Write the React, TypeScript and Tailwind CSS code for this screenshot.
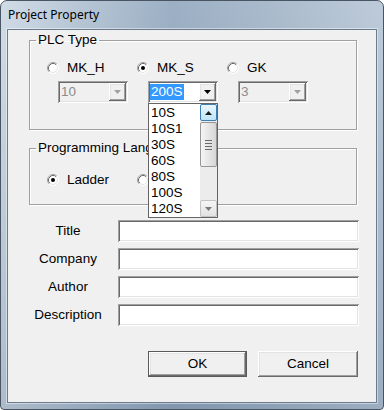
import React from "react";

const SUNKEN =
  "shadow-[inset_1px_1px_0_#a0a0a0,inset_-1px_-1px_0_#ffffff,inset_2px_2px_0_#696969,inset_-2px_-2px_0_#e3e3e3]";
const RAISED =
  "shadow-[inset_-1px_-1px_0_#696969,inset_1px_1px_0_#ffffff,inset_-2px_-2px_0_#a0a0a0,inset_2px_2px_0_#e3e3e3]";

function Radio({ checked }: { checked?: boolean }) {
  return (
    <svg width="12" height="12" viewBox="0 0 12 12" className="shrink-0">
      <circle cx="6" cy="6" r="5.5" fill="#ffffff" />
      <path d="M2.11 9.89 A5.5 5.5 0 0 1 9.89 2.11" fill="none" stroke="#a0a0a0" strokeWidth="1" />
      <path d="M9.89 2.11 A5.5 5.5 0 0 1 2.11 9.89" fill="none" stroke="#ffffff" strokeWidth="1" />
      <path d="M2.82 9.18 A4.5 4.5 0 0 1 9.18 2.82" fill="none" stroke="#696969" strokeWidth="1" />
      <path d="M9.18 2.82 A4.5 4.5 0 0 1 2.82 9.18" fill="none" stroke="#e3e3e3" strokeWidth="1" />
      {checked && <circle cx="6" cy="6" r="2" fill="#000000" />}
    </svg>
  );
}

function Arrow({ color, up }: { color: string; up?: boolean }) {
  return (
    <svg width="7" height="4" viewBox="0 0 7 4">
      <polygon points={up ? "0,4 7,4 3.5,0" : "0,0 7,0 3.5,4"} fill={color} />
    </svg>
  );
}

function Combo({
  value,
  disabled,
  selected,
  children,
}: {
  value: string;
  disabled?: boolean;
  selected?: boolean;
  children?: React.ReactNode;
}) {
  return (
    <div
      className={`relative flex h-[22px] w-[70px] items-center ${
        disabled ? "bg-[#f0f0f0]" : "bg-white"
      } ${SUNKEN}`}
    >
      <div className="flex-1 overflow-hidden leading-[16px]">
        {selected ? (
          <span className="ml-[2px] inline-block bg-[#3399ff] px-[1px] leading-[16px] text-white">{value}</span>
        ) : (
          <span className={`ml-[3px] ${disabled ? "text-[#8c8c8c]" : "text-black"}`}>{value}</span>
        )}
      </div>
      <div className={`mr-[2px] flex h-[18px] w-[17px] items-center justify-center bg-[#f0f0f0] ${RAISED}`}>
        <Arrow color={disabled ? "#a0a0a0" : "#000000"} />
      </div>
      {children}
    </div>
  );
}

function DropList() {
  const items = ["10S", "10S1", "30S", "60S", "80S", "100S", "120S"];
  return (
    <div className="absolute left-0 top-[22px] z-10 flex h-[115px] w-[70px] border border-[#646464] bg-white">
      <div className="flex-1 pt-[1px]">
        {items.map((it) => (
          <div key={it} className="h-[16px] pl-[2px] leading-[16px] text-black">
            {it}
          </div>
        ))}
      </div>
      <div className="flex w-[17px] flex-col bg-[#ececec]">
        <div className="flex h-[17px] items-center justify-center rounded-[2px] border border-[#3c7fb1] bg-[linear-gradient(#eaf6fd,#bfe4f8)]">
          <Arrow color="#1c1c1c" up />
        </div>
        <div className="mt-[1px] flex h-[45px] flex-col items-center justify-center gap-[2px] rounded-[2px] border border-[#979797] bg-[linear-gradient(to_right,#f4f4f4,#e6e6e6_50%,#d6d6d6)]">
          <div className="h-[1px] w-[7px] bg-[#6a6a6a]" />
          <div className="h-[1px] w-[7px] bg-[#6a6a6a]" />
          <div className="h-[1px] w-[7px] bg-[#6a6a6a]" />
          <div className="h-[1px] w-[7px] bg-[#6a6a6a]" />
        </div>
        <div className="flex-1" />
        <div className="flex h-[17px] items-center justify-center rounded-[2px] border border-[#c2c2c2] bg-[linear-gradient(#f6f6f6,#e2e2e2)]">
          <Arrow color="#7a7a7a" />
        </div>
      </div>
    </div>
  );
}

function Field({ label }: { label: string }) {
  return (
    <>
      <div className="flex h-[22px] items-center justify-center pt-[1px] text-black">{label}</div>
      <div className={`h-[22px] bg-white ${SUNKEN}`} />
    </>
  );
}

export default function App() {
  return (
    <div className="h-[410px] w-[384px] bg-white">
      <div className="flex h-[410px] w-[384px] flex-col overflow-hidden rounded-t-[7px] rounded-b-[4px] border border-[#4a5563] bg-[linear-gradient(to_bottom,rgba(255,255,255,0.08)_0%,rgba(60,85,115,0.22)_100%),linear-gradient(to_right,#cdd9e5_0%,#afc0d1_22%,#94a9bf_45%,#a3b5c8_70%,#b8c7d6_100%)]">
        <div className="flex h-[28px] items-center pl-[7px] font-['Noto_Sans',sans-serif] text-[12px] text-black">
          Project Property
        </div>
        <div className="mx-[6px] h-[374px] border border-[#6b7b8e] bg-[#f0f0f0] pl-[21px] font-['Liberation_Sans',Arial,sans-serif] text-[13.5px] text-black shadow-[0_0_0_1px_rgba(255,255,255,0.45)]">
          <fieldset className="mt-[2px] w-[328px] border border-[#a0a0a0] shadow-[inset_1px_1px_0_#ffffff,1px_1px_0_#ffffff]">
            <legend className="ml-[6px] px-[2px] leading-[16px]">PLC Type</legend>
            <div className="flex pb-[26px] pl-[17px] pt-[12px]">
              <div className="flex w-[90px] flex-col">
                <div className="flex h-[16px] items-center gap-[8px]">
                  <Radio />
                  <span>MK_H</span>
                </div>
                <div className="ml-[11px] mt-[5px]">
                  <Combo value="10" disabled />
                </div>
              </div>
              <div className="flex w-[90px] flex-col">
                <div className="flex h-[16px] items-center gap-[8px]">
                  <Radio checked />
                  <span>MK_S</span>
                </div>
                <div className="ml-[11px] mt-[5px]">
                  <Combo value="200S" selected>
                    <DropList />
                  </Combo>
                </div>
              </div>
              <div className="flex w-[90px] flex-col">
                <div className="flex h-[16px] items-center gap-[8px]">
                  <Radio />
                  <span>GK</span>
                </div>
                <div className="ml-[11px] mt-[5px]">
                  <Combo value="3" disabled />
                </div>
              </div>
            </div>
          </fieldset>

          <fieldset className="mt-[10px] w-[328px] border border-[#a0a0a0] shadow-[inset_1px_1px_0_#ffffff,1px_1px_0_#ffffff]">
            <legend className="ml-[6px] px-[2px] leading-[16px]">Programming Language</legend>
            <div className="flex pb-[16px] pl-[17px] pt-[16px]">
              <div className="flex h-[16px] w-[90px] items-center gap-[8px]">
                <Radio checked />
                <span>Ladder</span>
              </div>
              <div className="flex h-[16px] w-[90px] items-center gap-[8px]">
                <Radio />
              </div>
            </div>
          </fieldset>

          <div className="ml-[1px] mt-[15px] grid grid-cols-[76px_241px] gap-x-[12px] gap-y-[6px]">
            <Field label="Title" />
            <Field label="Company" />
            <Field label="Author" />
            <Field label="Description" />
          </div>

          <div className="mt-[25px] flex gap-[11px] pl-[119px]">
            <button className={`flex h-[26px] w-[99px] items-center justify-center border border-[#5a5a5a] bg-[#f0f0f0] ${RAISED}`}>
              OK
            </button>
            <button className={`flex h-[26px] w-[100px] items-center justify-center bg-[#f0f0f0] ${RAISED}`}>
              Cancel
            </button>
          </div>
        </div>
      </div>
    </div>
  );
}
